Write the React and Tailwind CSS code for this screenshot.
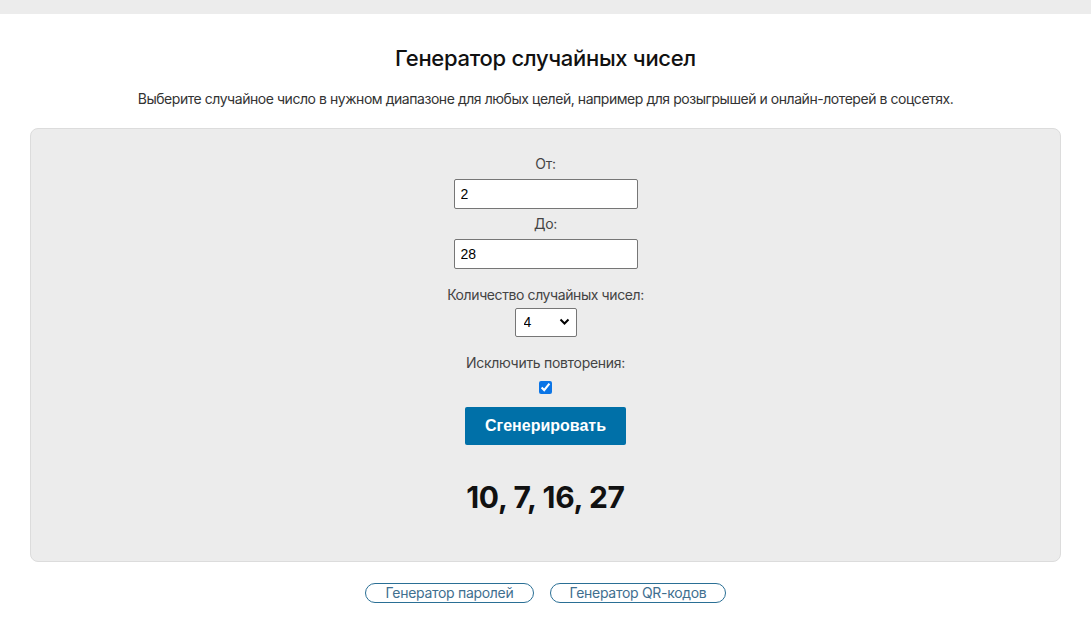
import { useState } from 'react';

export default function App() {
  const [from, setFrom] = useState('2');
  const [to, setTo] = useState('28');
  const [count, setCount] = useState('4');
  const [unique, setUnique] = useState(true);
  const result = [10, 7, 16, 27];

  return (
    <div className="min-h-[625px] bg-white text-[#222] font-['Inter',sans-serif]">
      <div className="h-[14px] bg-[#ececec]" />

      <h1 className="mt-[30px] text-center text-[22px] leading-[28px] font-medium text-[#111] tracking-[-0.3px]">
        Генератор случайных чисел
      </h1>
      <p className="mt-[17px] text-center text-[14px] leading-[20px] text-[#333] tracking-[-0.45px]">
        Выберите случайное число в нужном диапазоне для любых целей, например для розыгрышей и онлайн-лотерей в соцсетях.
      </p>

      {/* Main panel */}
      <div className="mx-[30px] mt-[19px] h-[434px] rounded-lg border border-[#dcdcdc] bg-[#ececec] flex flex-col items-center pt-[25px]">
        <label className="text-[14px] leading-[20px] text-[#444] tracking-[-0.3px]">От:</label>
        <input
          value={from}
          onChange={e => setFrom(e.target.value)}
          className="mt-[5px] w-[184px] h-[30px] rounded-[2px] border border-[#767676] bg-white px-[6px] text-[14px] font-['Liberation_Sans',sans-serif] text-black outline-none"
        />
        <label className="mt-[5px] text-[14px] leading-[20px] text-[#444] tracking-[-0.3px]">До:</label>
        <input
          value={to}
          onChange={e => setTo(e.target.value)}
          className="mt-[5px] w-[184px] h-[30px] rounded-[2px] border border-[#767676] bg-white px-[6px] text-[14px] font-['Liberation_Sans',sans-serif] text-black outline-none"
        />
        <label className="mt-[16px] text-[14px] leading-[20px] text-[#444] tracking-[-0.4px]">Количество случайных чисел:</label>
        <div className="relative mt-[3px] w-[62px] h-[29px]">
          <select
            value={count}
            onChange={e => setCount(e.target.value)}
            className="appearance-none w-full h-full rounded-[2px] border border-[#767676] bg-white pl-[8px] text-[14px] font-['Liberation_Sans',sans-serif] text-black outline-none"
          >
            {[1, 2, 3, 4, 5, 6, 7, 8, 9, 10].map(n => (
              <option key={n} value={n}>{n}</option>
            ))}
          </select>
          <svg className="pointer-events-none absolute right-[7px] top-[10px]" width="11" height="8" viewBox="0 0 11 8">
            <path d="M1.5 1.5 L5.5 5.5 L9.5 1.5" fill="none" stroke="#000" strokeWidth="2" />
          </svg>
        </div>
        <label className="mt-[16px] text-[14px] leading-[20px] text-[#444] tracking-[-0.3px]">Исключить повторения:</label>
        <input
          type="checkbox"
          checked={unique}
          onChange={e => setUnique(e.target.checked)}
          className="mt-[8px] w-[13px] h-[13px] accent-[#0b75e6]"
        />
        <button className="mt-[13px] w-[161px] h-[38px] rounded-[2px] bg-[#0070a8] text-white text-[16px] font-bold font-['Liberation_Sans',sans-serif]">
          Сгенерировать
        </button>
        <div className="mt-[34px] text-[30px] leading-[36px] font-bold text-[#111] tracking-[-0.3px]">
          {result.join(', ')}
        </div>
      </div>

      {/* Links */}
      <div className="mt-[21px] flex justify-center gap-[16px]">
        <a href="#" className="h-[20px] w-[169px] rounded-full border border-[#2a6f95] text-[#3f6f8f] text-[14px] leading-[18px] text-center tracking-[-0.3px]">
          Генератор паролей
        </a>
        <a href="#" className="h-[20px] w-[176px] rounded-full border border-[#2a6f95] text-[#3f6f8f] text-[14px] leading-[18px] text-center tracking-[-0.3px]">
          Генератор QR-кодов
        </a>
      </div>
    </div>
  );
}
